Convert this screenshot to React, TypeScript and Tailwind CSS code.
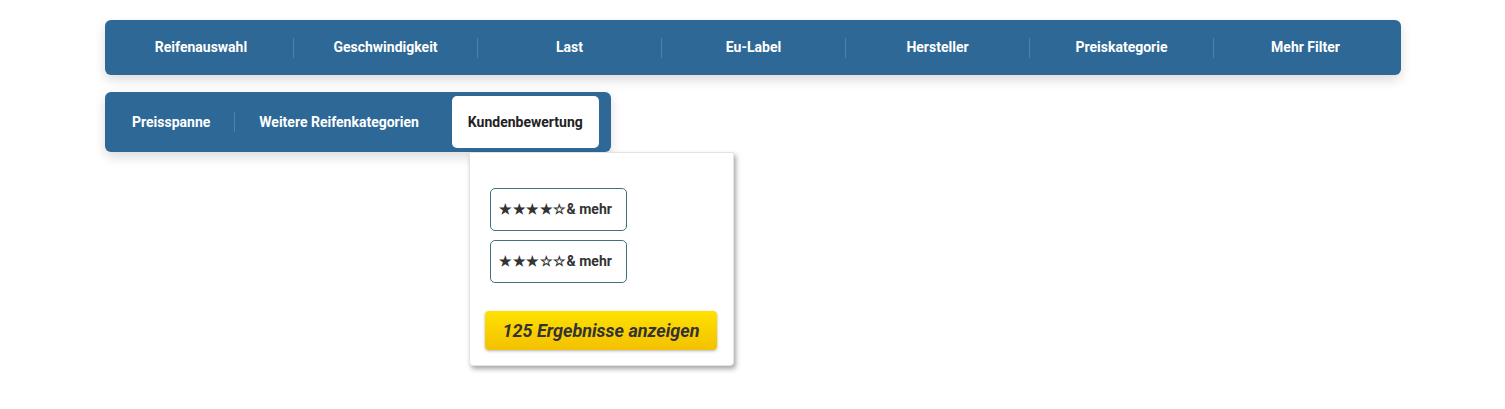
const topItems = [
  "Reifenauswahl",
  "Geschwindigkeit",
  "Last",
  "Eu-Label",
  "Hersteller",
  "Preiskategorie",
  "Mehr Filter",
];

export default function App() {
  return (
    <div className="min-h-screen bg-white pt-5 font-['Roboto',sans-serif]">
      <div className="ml-[105px] w-[1296px]">
        {/* Hauptfilter */}
        <div className="flex h-[55px] items-center rounded-md bg-[#2d6896] px-1 shadow-[0_5px_12px_rgba(0,0,0,0.14)]">
          {topItems.map((item, i) => (
            <div key={item} className="flex flex-1 items-center">
              {i > 0 && <div className="h-5 w-px bg-[#4f82a8]" />}
              <div className="flex-1 text-center text-[14px] font-bold text-white">{item}</div>
            </div>
          ))}
        </div>

        {/* Zweite Reihe */}
        <div className="relative mt-[17px] inline-flex h-[60px] items-center rounded-md bg-[#2d6896] py-1 pl-1 pr-3 shadow-[0_5px_12px_rgba(0,0,0,0.14)]">
          <div className="pl-[23px] pr-[24px] text-[14px] font-bold text-white">Preisspanne</div>
          <div className="h-5 w-px bg-[#4f82a8]" />
          <div className="pl-[24px] pr-[33px] text-[14px] font-bold text-white">Weitere Reifenkategorien</div>
          <div className="flex h-[52px] items-center rounded-[5px] bg-white px-4 text-[14px] font-bold text-[#222]">
            Kundenbewertung
          </div>

          {/* Dropdown */}
          <div className="absolute left-[364px] top-[60px] z-10 w-[265px] rounded-b-[4px] border border-[#e4e4e4] bg-white px-4 pb-[15px] pt-[35px] shadow-[2px_3px_5px_rgba(0,0,0,0.35)]">
            <div className="flex flex-col items-start gap-[9px] pl-1">
              <button className="flex h-[43px] w-[137px] items-center rounded-[5px] border border-[#3f7183] pl-[8px] text-[14px] font-bold text-[#333]">
                <span className="text-[14px] tracking-[0.5px]">★★★★☆</span>& mehr
              </button>
              <button className="flex h-[43px] w-[137px] items-center rounded-[5px] border border-[#3f7183] pl-[8px] text-[14px] font-bold text-[#333]">
                <span className="text-[14px] tracking-[0.5px]">★★★☆☆</span>& mehr
              </button>
            </div>
            <button className="mt-[28px] -ml-px h-[39px] w-[232px] rounded-[4px] bg-[linear-gradient(#ffe100,#f3c100)] text-[18px] font-bold italic text-[#333] shadow-[0_1px_3px_rgba(0,0,0,0.3)]">
              125 Ergebnisse anzeigen
            </button>
          </div>
        </div>
      </div>
    </div>
  );
}
